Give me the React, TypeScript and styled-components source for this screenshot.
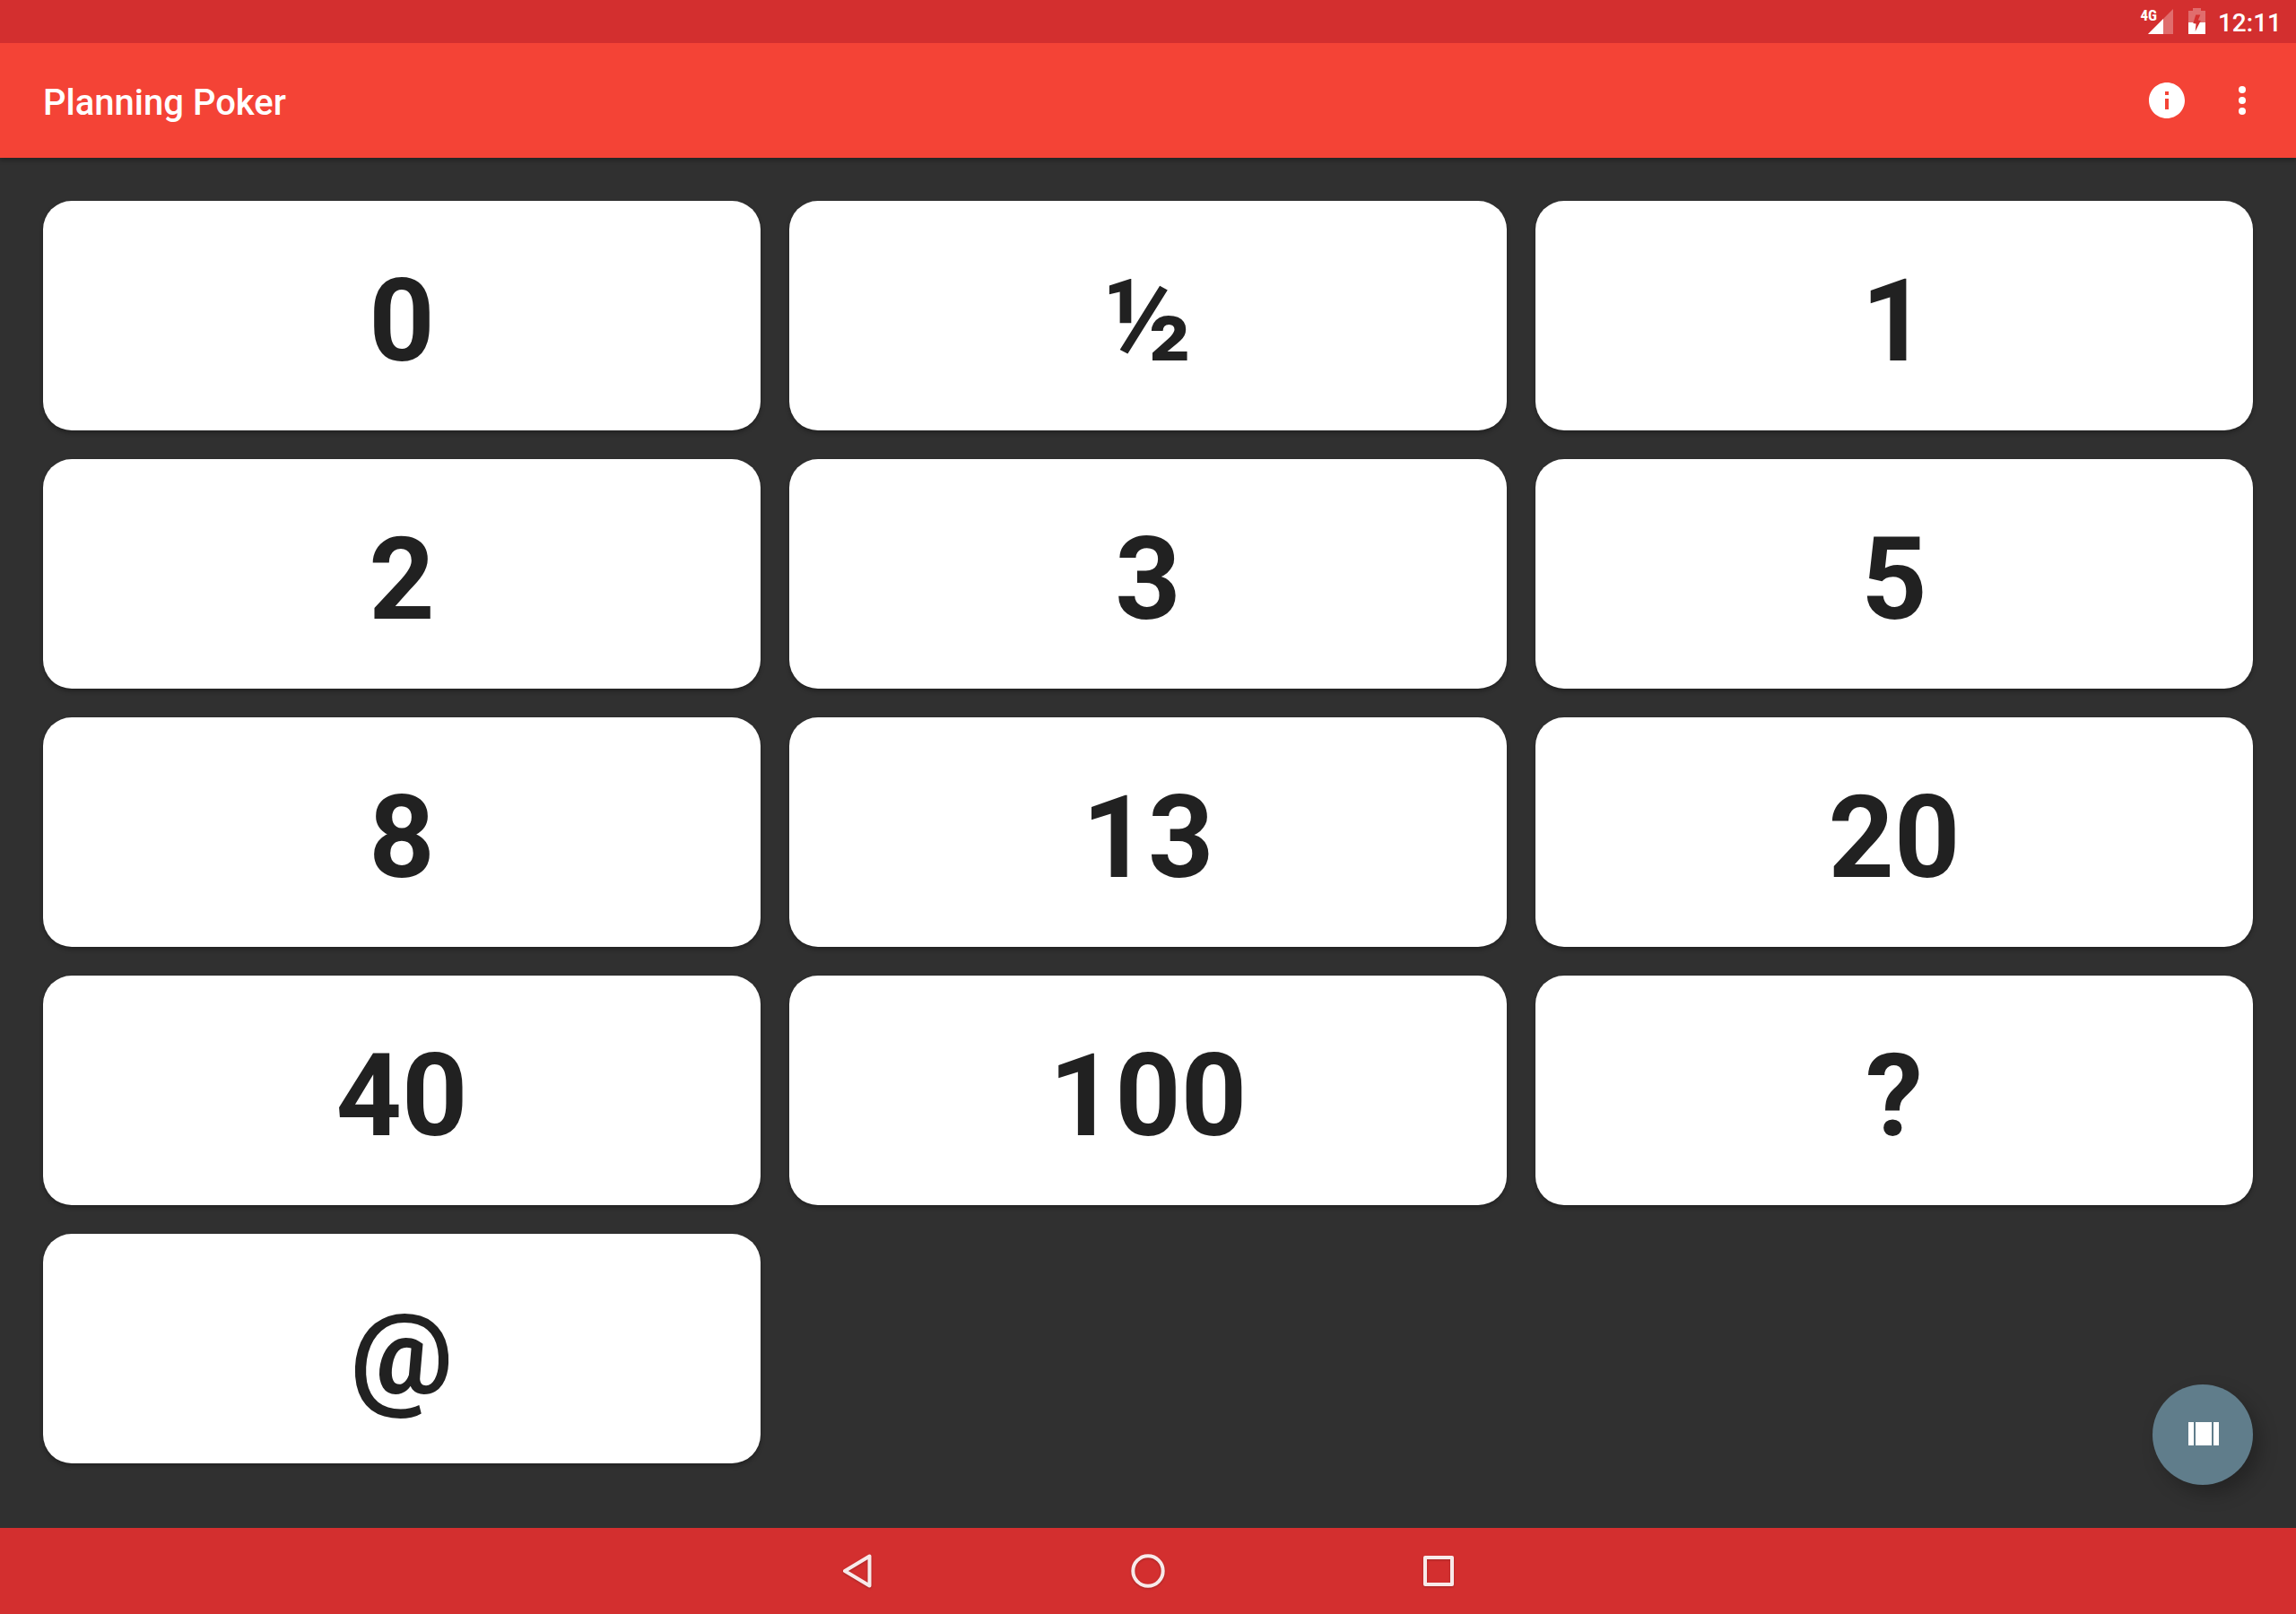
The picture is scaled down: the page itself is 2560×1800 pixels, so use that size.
import React from "react";
import styled, { createGlobalStyle } from "styled-components";

const GlobalStyle = createGlobalStyle`
  *, *::before, *::after { box-sizing: border-box; }
  body {
    margin: 0;
    background: #303030;
    font-family: Roboto, "Noto Sans", sans-serif;
  }
  button { font: inherit; border: 0; padding: 0; margin: 0; background: none; cursor: pointer; }
  svg { display: block; }
`;

const Screen = styled.div`
  min-height: 100vh;
  display: flex;
  flex-direction: column;
`;

const StatusBar = styled.div`
  height: 48px;
  padding: 0 16px;
  display: flex;
  align-items: center;
  justify-content: flex-end;
  background: #d32f2f;
  color: #fff;
`;

const Signal = styled.div`
  height: 48px;
  display: flex;
  margin-right: 16px;
`;

const Network = styled.span`
  padding-top: 8px;
  font-family: "Roboto Condensed", "Liberation Sans Narrow", Roboto, sans-serif;
  font-size: 17px;
  line-height: 18px;
  font-weight: 700;
  margin-right: -10px;
`;

const Clock = styled.time`
  margin-left: 14px;
  padding-top: 4px;
  font-size: 28px;
  line-height: 32px;
  font-weight: 500;
`;

const AppBar = styled.header`
  height: 128px;
  padding: 0 48px;
  display: flex;
  align-items: center;
  justify-content: space-between;
  background: #f44336;
  color: #fff;
  box-shadow: 0 4px 4px rgba(0, 0, 0, 0.2);
`;

const Title = styled.h1`
  margin: 0;
  padding-top: 6px;
  font-size: 40px;
  line-height: 48px;
  font-weight: 500;
`;

const Actions = styled.div`
  display: flex;
  gap: 36px;
  margin-right: -12px;
`;

const IconButton = styled.button`
  width: 48px;
  height: 48px;
  color: #fff;
`;

const Deck = styled.main`
  flex: 1;
  padding: 48px;
  display: grid;
  grid-template-columns: repeat(3, 1fr);
  grid-auto-rows: 256px;
  align-content: start;
  gap: 32px;
`;

const Card = styled.button`
  && {
    padding-top: 12px;
    border-radius: 32px;
    background: #fff;
    color: #212121;
    font-size: 128px;
    line-height: 152px;
    font-weight: 700;
    box-shadow: 0 3px 5px rgba(0, 0, 0, 0.3);
  }
`;

const Fab = styled.button`
  && {
    position: fixed;
    right: 48px;
    bottom: 144px;
    width: 112px;
    height: 112px;
    display: grid;
    place-items: center;
    border-radius: 50%;
    background: #607d8b;
    box-shadow: 8px 10px 20px rgba(0, 0, 0, 0.25);
  }
`;

const NavBar = styled.nav`
  height: 96px;
  display: flex;
  justify-content: center;
  align-items: center;
  gap: 228px;
  background: #d32f2f;
`;

const NavButton = styled.button`
  width: 96px;
  height: 96px;
  display: grid;
  place-items: center;
`;

const NavIcon = styled.svg`
  width: 48px;
  height: 48px;
  fill: none;
  stroke: #fff;
  stroke-opacity: 0.9;
  stroke-width: 4;
  stroke-linejoin: round;
  filter: drop-shadow(0 1px 1px rgba(0, 0, 0, 0.25));
`;

const values = ["0", "½", "1", "2", "3", "5", "8", "13", "20", "40", "100", "?", "@"];

export default function App() {
  return (
    <Screen>
      <GlobalStyle />
      <StatusBar>
        <Signal>
          <Network>4G</Network>
          <svg width="28" height="48" viewBox="0 0 28 48" aria-hidden="true">
            <path d="M28 10V38H0z" fill="#fff" fillOpacity=".3" />
            <path d="M17 21V38H0z" fill="#fff" />
          </svg>
        </Signal>
        <svg width="20" height="48" viewBox="-1 0 20 48" aria-hidden="true">
          <path d="M5 9h9v3h5v13H0V12h5z" fill="#fff" fillOpacity=".3" />
          <path d="M0 25h19v13H0z" fill="#fff" />
          <path d="M8.300 16.500h5l-2.500 6 3 .5L7.700 35l.8-8.500L5.300 26z" fill="#d32f2f" />
        </svg>
        <Clock>12:11</Clock>
      </StatusBar>
      <AppBar>
        <Title>Planning Poker</Title>
        <Actions>
          <IconButton aria-label="About">
            <svg width="48" height="48" viewBox="0 0 24 24" fill="currentColor">
              <path d="M12 2C6.480 2 2 6.480 2 12s4.480 10 10 10 10-4.480 10-10S17.520 2 12 2zm1 15h-2v-6h2v6zm0-8h-2V7h2v2z" />
            </svg>
          </IconButton>
          <IconButton aria-label="More options">
            <svg width="48" height="48" viewBox="0 0 24 24" fill="currentColor">
              <circle cx="12" cy="6" r="2" />
              <circle cx="12" cy="12" r="2" />
              <circle cx="12" cy="18" r="2" />
            </svg>
          </IconButton>
        </Actions>
      </AppBar>
      <Deck>
        {values.map((value) => (
          <Card key={value}>{value}</Card>
        ))}
      </Deck>
      <Fab aria-label="Show deck">
        <svg width="48" height="48" viewBox="0 0 48 48" fill="#fff">
          <path d="M8 10h6v26H8zM16 10h18v26H16zM36 10h6v26h-6z" />
        </svg>
      </Fab>
      <NavBar>
        <NavButton aria-label="Back">
          <NavIcon viewBox="0 0 48 48">
            <path d="M37.500 7.500V40.500L10 24z" />
          </NavIcon>
        </NavButton>
        <NavButton aria-label="Home">
          <NavIcon viewBox="0 0 48 48">
            <circle cx="24" cy="24" r="16.700" />
          </NavIcon>
        </NavButton>
        <NavButton aria-label="Recent apps">
          <NavIcon viewBox="0 0 48 48">
            <path d="M9 9h30v30H9z" />
          </NavIcon>
        </NavButton>
      </NavBar>
    </Screen>
  );
}
